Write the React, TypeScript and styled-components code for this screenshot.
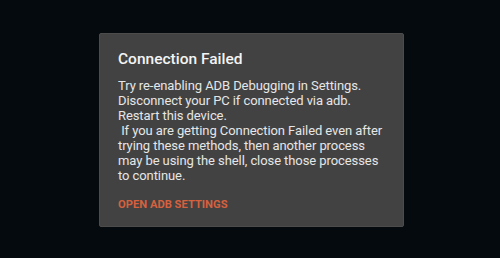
import React from 'react';
import styled, { createGlobalStyle } from 'styled-components';

const Global = createGlobalStyle`
  html, body {
    margin: 0;
    padding: 0;
    background: #050a0f;
  }
  body {
    font-family: Roboto, "Noto Sans", sans-serif;
  }
`;

const Screen = styled.div`
  width: 500px;
  height: 258px;
  box-sizing: border-box;
  padding: 33px 0 0 99px;
  background: #050a0f;
`;

const Dialog = styled.div`
  width: 305px;
  height: 194px;
  box-sizing: border-box;
  padding: 15px 16px 0 18px;
  background: #424242;
  border: 1px solid #4c4c4c;
  border-radius: 2px;
  display: flex;
  flex-direction: column;
`;

const Title = styled.h2`
  margin: 0;
  font-size: 15.5px;
  font-weight: 500;
  line-height: 20px;
  color: #f4f4f4;
`;

const Message = styled.p`
  margin: 9px 0 0;
  font-size: 13px;
  line-height: 15px;
  letter-spacing: -0.08px;
  color: #e6e6e6;
  white-space: pre-wrap;
`;

const Action = styled.button`
  align-self: flex-start;
  margin: 15px 0 0;
  padding: 0;
  border: none;
  background: none;
  font-family: inherit;
  font-size: 11.2px;
  font-weight: 700;
  color: #d5613f;
  cursor: pointer;
`;

const message = `Try re-enabling ADB Debugging in Settings.
Disconnect your PC if connected via adb.
Restart this device.
 If you are getting Connection Failed even after trying these methods, then another process may be using the shell, close those processes to continue.`;

export default function App() {
  return (
    <>
      <Global />
      <Screen>
        <Dialog>
          <Title>Connection Failed</Title>
          <Message>{message}</Message>
          <Action>OPEN ADB SETTINGS</Action>
        </Dialog>
      </Screen>
    </>
  );
}
